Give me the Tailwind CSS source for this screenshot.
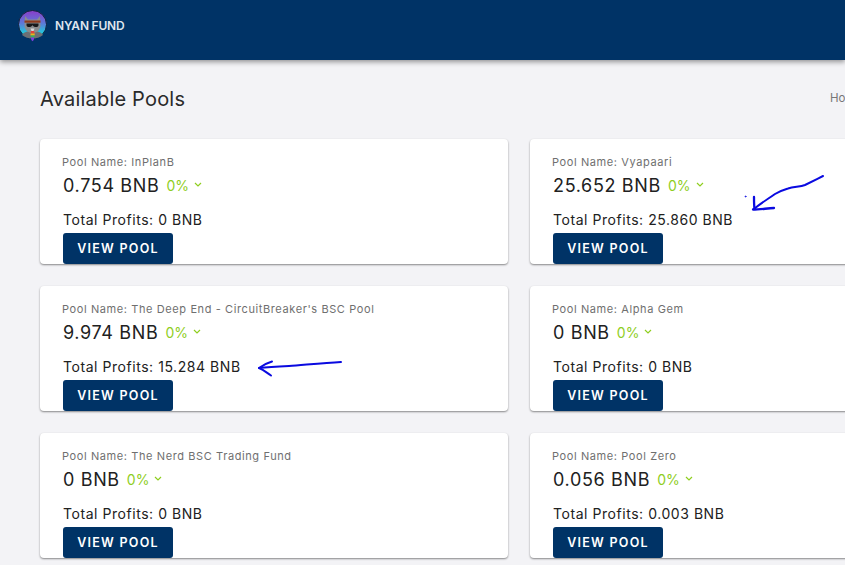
<!DOCTYPE html>
<html lang="en">
<head>
<meta charset="UTF-8">
<title>Nyan Fund</title>
<script src="https://cdn.jsdelivr.net/npm/@tailwindcss/browser@4"></script>
</head>
<body class="relative w-[845px] h-[565px] overflow-hidden bg-[#f3f3f6] font-['Inter','Liberation_Sans',sans-serif] text-[#212121]">

<!-- header -->
<header class="h-[60px] bg-[#003366] shadow-[0_2px_5px_rgba(0,0,0,0.4)] flex items-center pl-[18px] pb-[8px] gap-[8px] relative z-10">
  <svg class="w-[29px] h-[36px] mt-[4px]" viewBox="0 0 29 36">
    <defs>
      <linearGradient id="sky" x1="0" y1="0" x2="0" y2="1">
        <stop offset="0" stop-color="#8a3cc8"/>
        <stop offset="0.45" stop-color="#5f78d8"/>
        <stop offset="0.8" stop-color="#22c8dc"/>
      </linearGradient>
    </defs>
    <circle cx="14.500" cy="14.500" r="14" fill="url(#sky)" stroke="#10203a" stroke-width="1"/>
    <path d="M4 25c2-3 5-4 10.500-4s8.500 1 10.500 4c-3 2.500-6.500 3.500-10.500 3.500S7 27.500 4 25z" fill="#6b7075"/>
    <path d="M7 6l3 3.500h9L22 6l.5 10c-1 5-4 7-8 7s-7-2-8-7z" fill="#8a8c8e"/>
    <rect x="6.500" y="10.500" width="16" height="2.200" fill="#8f3a1c"/>
    <path d="M8.500 13.500h12v1.500c0 1.500-1 2-2.500 2s-3-.5-3.500-2c-.5 1.500-2 2-3.500 2s-2.500-.5-2.500-2z" fill="#17181a"/>
    <path d="M12.500 18.500h4l-1 2.500h-2z" fill="#d9d9d9"/>
    <path d="M13 21h3l.8 2.500h-4.300z" fill="#e0433a"/>
    <path d="M12.500 23.500h4.300l-.2 2h-4z" fill="#f0b419"/>
    <path d="M12.600 25.500h4l-.3 2h-3.400z" fill="#35b45a"/>
    <path d="M12.900 27.500h3.400l-.6 2.500-1.200 1.200-1.100-1.200z" fill="#7c3fe0"/>
  </svg>
  <span class="text-[12px] font-semibold text-[#dfe6ee] tracking-[-0.2px]">NYAN FUND</span>
</header>

<!-- page title -->
<div class="flex justify-between items-center pl-[40px] pt-[25px] h-[79px] pb-[26px] whitespace-nowrap">
  <h1 class="text-[20px] leading-[24px] font-normal text-[#2a2a2a] tracking-[0.2px]">Available Pools</h1>
  <span class="text-[11.500px] text-[#777] w-[15px] overflow-hidden">Home</span>
</div>

<!-- pool cards -->
<main class="grid grid-cols-[468px_468px] gap-x-[22px] gap-y-[22px] pl-[40px] w-[1100px]">

  <div class="h-[125px] bg-white rounded-[4px] shadow-[0_1px_2px_rgba(0,0,0,0.45)] pl-[22px] pt-[17px]">
    <p class="text-[11px] leading-[13px] tracking-[0.6px] text-[#6f6f6f]">Pool Name: InPlanB</p>
    <div class="flex items-center mt-[4px] ml-[1px] h-[24px]">
      <span class="text-[18px] tracking-[0.65px]">0.754 BNB</span>
      <span class="ml-[7px] text-[14px] text-[#8fce1f]">0%</span>
      <svg class="ml-[5px] w-[8px] h-[6px]" viewBox="0 0 8 6" fill="none" stroke="#8fce1f" stroke-width="1.200"><path d="M1 1l3 3 3-3"/></svg>
    </div>
    <p class="mt-[14px] ml-[1px] text-[14px] leading-[17px] tracking-[0.55px]">Total Profits: 0 BNB</p>
    <button class="mt-[5px] ml-[1px] pt-[2px] w-[110px] h-[31px] bg-[#003366] rounded-[3px] text-white text-[12.500px] font-semibold tracking-[1.25px]">VIEW POOL</button>
  </div>

  <div class="h-[125px] bg-white rounded-[4px] shadow-[0_1px_2px_rgba(0,0,0,0.45)] pl-[22px] pt-[17px]">
    <p class="text-[11px] leading-[13px] tracking-[0.6px] text-[#6f6f6f]">Pool Name: Vyapaari</p>
    <div class="flex items-center mt-[4px] ml-[1px] h-[24px]">
      <span class="text-[18px] tracking-[0.65px]">25.652 BNB</span>
      <span class="ml-[7px] text-[14px] text-[#8fce1f]">0%</span>
      <svg class="ml-[5px] w-[8px] h-[6px]" viewBox="0 0 8 6" fill="none" stroke="#8fce1f" stroke-width="1.200"><path d="M1 1l3 3 3-3"/></svg>
    </div>
    <p class="mt-[14px] ml-[1px] text-[14px] leading-[17px] tracking-[0.55px]">Total Profits: 25.860 BNB</p>
    <button class="mt-[5px] ml-[1px] pt-[2px] w-[110px] h-[31px] bg-[#003366] rounded-[3px] text-white text-[12.500px] font-semibold tracking-[1.25px]">VIEW POOL</button>
  </div>

  <div class="h-[125px] bg-white rounded-[4px] shadow-[0_1px_2px_rgba(0,0,0,0.45)] pl-[22px] pt-[17px]">
    <p class="text-[11px] leading-[13px] tracking-[0.6px] text-[#6f6f6f]">Pool Name: The Deep End - CircuitBreaker's BSC Pool</p>
    <div class="flex items-center mt-[4px] ml-[1px] h-[24px]">
      <span class="text-[18px] tracking-[0.65px]">9.974 BNB</span>
      <span class="ml-[7px] text-[14px] text-[#8fce1f]">0%</span>
      <svg class="ml-[5px] w-[8px] h-[6px]" viewBox="0 0 8 6" fill="none" stroke="#8fce1f" stroke-width="1.200"><path d="M1 1l3 3 3-3"/></svg>
    </div>
    <p class="mt-[14px] ml-[1px] text-[14px] leading-[17px] tracking-[0.55px]">Total Profits: 15.284 BNB</p>
    <button class="mt-[5px] ml-[1px] pt-[2px] w-[110px] h-[31px] bg-[#003366] rounded-[3px] text-white text-[12.500px] font-semibold tracking-[1.25px]">VIEW POOL</button>
  </div>

  <div class="h-[125px] bg-white rounded-[4px] shadow-[0_1px_2px_rgba(0,0,0,0.45)] pl-[22px] pt-[17px]">
    <p class="text-[11px] leading-[13px] tracking-[0.6px] text-[#6f6f6f]">Pool Name: Alpha Gem</p>
    <div class="flex items-center mt-[4px] ml-[1px] h-[24px]">
      <span class="text-[18px] tracking-[0.65px]">0 BNB</span>
      <span class="ml-[7px] text-[14px] text-[#8fce1f]">0%</span>
      <svg class="ml-[5px] w-[8px] h-[6px]" viewBox="0 0 8 6" fill="none" stroke="#8fce1f" stroke-width="1.200"><path d="M1 1l3 3 3-3"/></svg>
    </div>
    <p class="mt-[14px] ml-[1px] text-[14px] leading-[17px] tracking-[0.55px]">Total Profits: 0 BNB</p>
    <button class="mt-[5px] ml-[1px] pt-[2px] w-[110px] h-[31px] bg-[#003366] rounded-[3px] text-white text-[12.500px] font-semibold tracking-[1.25px]">VIEW POOL</button>
  </div>

  <div class="h-[125px] bg-white rounded-[4px] shadow-[0_1px_2px_rgba(0,0,0,0.45)] pl-[22px] pt-[17px]">
    <p class="text-[11px] leading-[13px] tracking-[0.6px] text-[#6f6f6f]">Pool Name: The Nerd BSC Trading Fund</p>
    <div class="flex items-center mt-[4px] ml-[1px] h-[24px]">
      <span class="text-[18px] tracking-[0.65px]">0 BNB</span>
      <span class="ml-[7px] text-[14px] text-[#8fce1f]">0%</span>
      <svg class="ml-[5px] w-[8px] h-[6px]" viewBox="0 0 8 6" fill="none" stroke="#8fce1f" stroke-width="1.200"><path d="M1 1l3 3 3-3"/></svg>
    </div>
    <p class="mt-[14px] ml-[1px] text-[14px] leading-[17px] tracking-[0.55px]">Total Profits: 0 BNB</p>
    <button class="mt-[5px] ml-[1px] pt-[2px] w-[110px] h-[31px] bg-[#003366] rounded-[3px] text-white text-[12.500px] font-semibold tracking-[1.25px]">VIEW POOL</button>
  </div>

  <div class="h-[125px] bg-white rounded-[4px] shadow-[0_1px_2px_rgba(0,0,0,0.45)] pl-[22px] pt-[17px]">
    <p class="text-[11px] leading-[13px] tracking-[0.6px] text-[#6f6f6f]">Pool Name: Pool Zero</p>
    <div class="flex items-center mt-[4px] ml-[1px] h-[24px]">
      <span class="text-[18px] tracking-[0.65px]">0.056 BNB</span>
      <span class="ml-[7px] text-[14px] text-[#8fce1f]">0%</span>
      <svg class="ml-[5px] w-[8px] h-[6px]" viewBox="0 0 8 6" fill="none" stroke="#8fce1f" stroke-width="1.200"><path d="M1 1l3 3 3-3"/></svg>
    </div>
    <p class="mt-[14px] ml-[1px] text-[14px] leading-[17px] tracking-[0.55px]">Total Profits: 0.003 BNB</p>
    <button class="mt-[5px] ml-[1px] pt-[2px] w-[110px] h-[31px] bg-[#003366] rounded-[3px] text-white text-[12.500px] font-semibold tracking-[1.25px]">VIEW POOL</button>
  </div>
</main>

<!-- hand drawn annotations on top of the screenshot -->
<svg class="absolute left-0 top-0 w-[845px] h-[565px] pointer-events-none z-20" viewBox="0 0 845 565" fill="none" stroke="#0a0ae0" stroke-linecap="round" stroke-linejoin="round">
  <path stroke-width="2" d="M823 176c-6 3-10 5-18 9-5 2-11 1.500-17 3.500-5 1.500-9 3-13 5.500-7 5-14 9-21 15"/>
  <path stroke-width="2.300" d="M754 197c0 4 0 8 .5 12M753 209.500c6 0 13-1 21-1.500"/>
  <circle cx="745.500" cy="196.500" r="0.500" stroke-width="0.800"/>
  <path stroke-width="2" d="M341 362c-18 1-38 3-52 4-10 .5-20 1-30 2"/>
  <path stroke-width="2" d="M259 368c4-3 8-5 13-6.500M259 368c5 2 8 5 12 7.500"/>
</svg>
</body>
</html>
